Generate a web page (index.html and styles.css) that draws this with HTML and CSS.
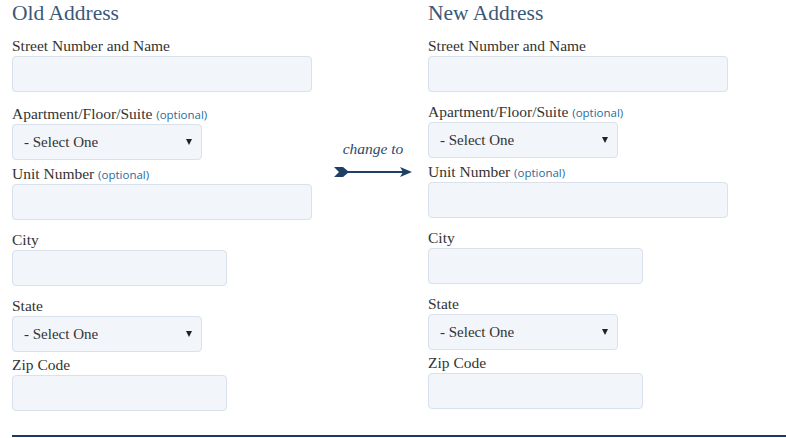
FILE: index.html
```html
<!DOCTYPE html>
<html lang="en">
<head>
<meta charset="utf-8">
<title>Change of Address</title>
<link rel="stylesheet" href="styles.css">
</head>
<body>
<div class="page">
  <div class="columns">
    <section class="col">
      <h2 class="col-title">Old Address</h2>
      <div class="field field--text field--first">
        <label class="label">Street Number and Name</label>
        <div class="box box--wide"></div>
      </div>
      <div class="field field--select field--apt">
        <label class="label">Apartment/Floor/Suite <span class="opt">(optional)</span></label>
        <div class="box box--select"><span>- Select One</span><svg class="caret" width="6" height="6" viewBox="0 0 6 6"><polygon points="0,0 6,0 3,6" fill="#222"/></svg></div>
      </div>
      <div class="field field--text">
        <label class="label">Unit Number <span class="opt">(optional)</span></label>
        <div class="box box--wide"></div>
      </div>
      <div class="field field--text">
        <label class="label">City</label>
        <div class="box box--mid"></div>
      </div>
      <div class="field field--select">
        <label class="label">State</label>
        <div class="box box--select"><span>- Select One</span><svg class="caret" width="6" height="6" viewBox="0 0 6 6"><polygon points="0,0 6,0 3,6" fill="#222"/></svg></div>
      </div>
      <div class="field field--text">
        <label class="label">Zip Code</label>
        <div class="box box--mid"></div>
      </div>
    </section>

    <div class="change">
      <span class="change-text">change to</span>
      <svg class="arrow" width="78" height="12" viewBox="0 0 78 12">
        <polygon points="0,1 9,1 15,6 9,11 0,11 5,6" fill="#1e3f66"/>
        <line x1="14" y1="6" x2="72" y2="6" stroke="#1e3f66" stroke-width="2"/>
        <polygon points="66,1 78,6 66,11 69,6" fill="#1e3f66"/>
      </svg>
    </div>

    <section class="col col--new">
      <h2 class="col-title">New Address</h2>
      <div class="field field--text">
        <label class="label">Street Number and Name</label>
        <div class="box box--wide"></div>
      </div>
      <div class="field field--select field--apt">
        <label class="label">Apartment/Floor/Suite <span class="opt">(optional)</span></label>
        <div class="box box--select"><span>- Select One</span><svg class="caret" width="6" height="6" viewBox="0 0 6 6"><polygon points="0,0 6,0 3,6" fill="#222"/></svg></div>
      </div>
      <div class="field field--text">
        <label class="label">Unit Number <span class="opt">(optional)</span></label>
        <div class="box box--wide"></div>
      </div>
      <div class="field field--text">
        <label class="label">City</label>
        <div class="box box--mid"></div>
      </div>
      <div class="field field--select">
        <label class="label">State</label>
        <div class="box box--select"><span>- Select One</span><svg class="caret" width="6" height="6" viewBox="0 0 6 6"><polygon points="0,0 6,0 3,6" fill="#222"/></svg></div>
      </div>
      <div class="field field--text">
        <label class="label">Zip Code</label>
        <div class="box box--mid"></div>
      </div>
    </section>
  </div>
  <div class="rule"></div>
</div>
</body>
</html>
```
FILE: styles.css
```css
html, body {
  margin: 0;
  padding: 0;
  background: #ffffff;
  overflow: hidden;
}
.page {
  padding-left: 12px;
  font-family: "Liberation Serif", "Times New Roman", serif;
  color: #333;
}
.columns {
  display: grid;
  grid-template-columns: 322px 94px 1fr;
  align-items: start;
}
.col-title {
  margin: 0 0 10px;
  font-size: 21.5px;
  line-height: 26px;
  font-weight: normal;
  color: #3b5878;
}
.label {
  display: block;
  height: 20px;
  font-size: 15.5px;
  line-height: 20px;
  color: #333;
}
.opt {
  font-family: "Open Sans", "Noto Sans", sans-serif;
  font-size: 11.5px;
  line-height: 1;
  color: #2b6a9e;
}
.field--text {
  margin-bottom: 10px;
}
.field--first {
  margin-bottom: 12px;
}
.field--select {
  margin-bottom: 3px;
}
.field--apt {
  margin-bottom: 4px;
}
.box {
  box-sizing: border-box;
  height: 36px;
  background: #f2f5fa;
  border: 1px solid #d9e1ea;
  border-radius: 4px;
}
.box--wide { width: 300px; }
.box--mid { width: 215px; }
.box--select {
  width: 190px;
  display: flex;
  align-items: center;
  justify-content: space-between;
  padding: 0 9px 0 11px;
  font-size: 15px;
  color: #333;
}
.caret { display: block; }
.change {
  display: flex;
  flex-direction: column;
  align-items: center;
  width: 78px;
  padding-top: 140px;
}
.change-text {
  font-style: italic;
  font-size: 15.5px;
  line-height: 18px;
  color: #2a4a70;
}
.arrow {
  display: block;
  margin-top: 8px;
}
.rule {
  margin-top: 14px;
  height: 2px;
  background: #1b3a5c;
}
```
